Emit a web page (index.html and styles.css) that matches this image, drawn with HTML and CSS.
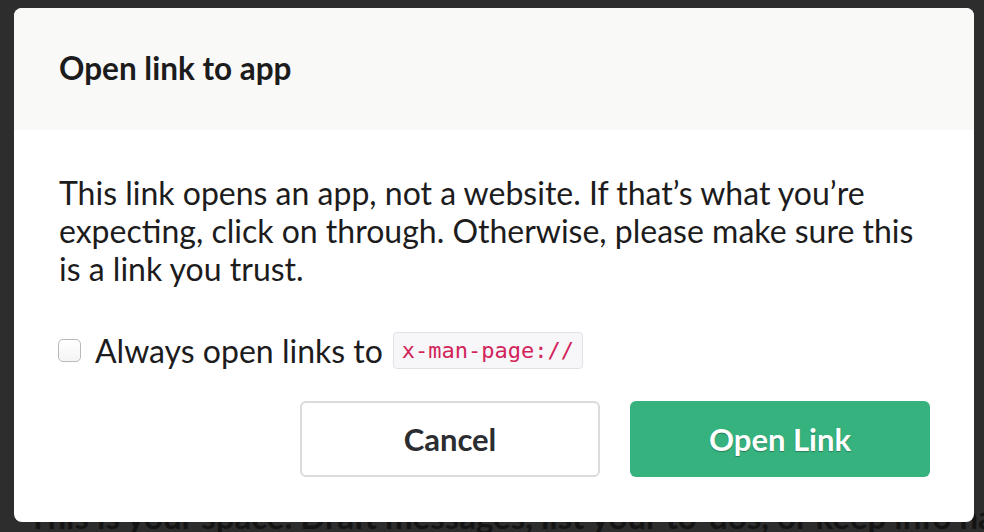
FILE: index.html
```html
<!DOCTYPE html>
<html lang="en">
<head>
    <meta charset="UTF-8">
    <meta name="viewport" content="width=device-width, initial-scale=1.0">
    <title>Open link to app</title>

    <link rel="stylesheet" href="styles.css">
</head>
<body>

<div class="modal">
    <div class="modal-header">
        <h1>Open link to app</h1>
    </div>
    <div class="modal-body">
        <p class="message">This link opens an app, not a website. If that’s what you’re expecting, click on through. Otherwise, please make sure this is a link you trust.</p>

        <label class="always">
            <input type="checkbox" class="check">
            <span>Always open links to</span>
            <code class="scheme">x-man-page://</code>
        </label>

        <div class="actions">
            <button class="btn btn-cancel">Cancel</button>
            <button class="btn btn-open">Open Link</button>
        </div>
    </div>
</div>

<p class="behind">This is your space. Draft messages, list your to-dos, or keep info handy.</p>

</body>
</html>
```

FILE: styles.css
```css
html, body {
    margin: 0;
    height: 100%;
    overflow: hidden;
}

body {
    background-color: #2d2d2d;
    font-family: Lato, "Open Sans", sans-serif;
    color: #1d1c1d;
    padding: 8px 10px 0 14px;
    box-sizing: border-box;
}

.modal {
    position: relative;
    z-index: 2;
    background-color: #fff;
    border-radius: 8px;
    overflow: hidden;
    height: 514px;
}

.modal-header {
    background-color: #f9f9f8;
    height: 122px;
    padding: 0 45px;
    display: flex;
    align-items: center;
    box-sizing: border-box;
}

.modal-header h1 {
    margin: 0;
    font-size: 31.5px;
    font-weight: 700;
    line-height: 1.2;
}

.modal-body {
    padding: 44px 44px 0 45px;
}

.message {
    margin: 0;
    font-size: 32px;
    line-height: 38px;
}

.always {
    display: flex;
    align-items: center;
    margin-top: 44px;
    height: 36px;
    font-size: 32px;
}

.check {
    appearance: none;
    -webkit-appearance: none;
    width: 23px;
    height: 23px;
    margin: 0 14px 0 -1px;
    border: 1px solid #b9b9b9;
    border-radius: 5px;
    background: linear-gradient(#fff, #f4f4f4);
    box-sizing: border-box;
}

.scheme {
    margin-left: 10px;
    padding: 0 8px;
    height: 37px;
    line-height: 36px;
    font-family: "DejaVu Sans Mono", "Liberation Mono", monospace;
    font-size: 22px;
    color: #d2245a;
    background-color: #f7f7f9;
    border: 1px solid #e1e1e8;
    border-radius: 4px;
    box-sizing: border-box;
}

.actions {
    display: flex;
    justify-content: flex-end;
    gap: 30px;
    margin-top: 33px;
}

.btn {
    width: 300px;
    height: 76px;
    border-radius: 6px;
    font-family: Lato, "Open Sans", sans-serif;
    font-size: 31px;
    font-weight: 700;
    cursor: pointer;
}

.btn-cancel {
    background-color: #fff;
    color: #2c2d30;
    border: 2px solid #d9dbdd;
}

.btn-open {
    background-color: #35b27e;
    color: #fff;
    border: none;
    text-shadow: 0 1px 1px rgba(0, 0, 0, 0.3);
}

.behind {
    position: relative;
    z-index: 1;
    margin: -26px 0 0 14px;
    font-size: 33px;
    font-weight: 700;
    color: #141414;
    white-space: nowrap;
}
```
